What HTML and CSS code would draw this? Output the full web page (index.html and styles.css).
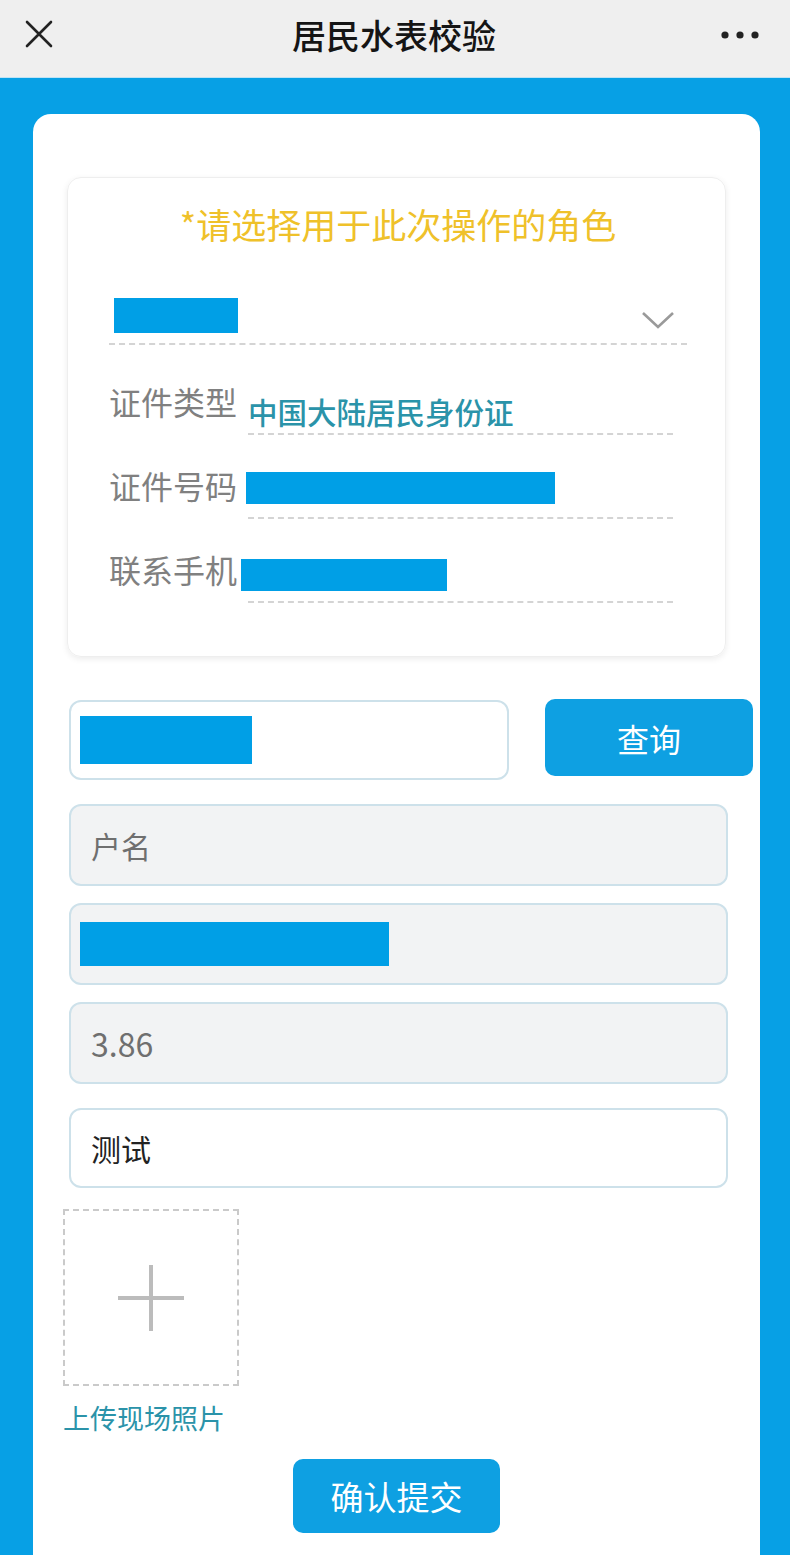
FILE: index.html
```html
<!DOCTYPE html>
<html lang="zh-CN">

<head>
    <meta charset="UTF-8">
    <meta name="viewport" content="width=device-width, initial-scale=1.0">
    <title>居民水表校验</title>
    <link rel="stylesheet" href="styles.css">
</head>

<body>
    <!-- Top bar -->
    <header class="topbar">
        <svg class="close-icon" width="28" height="28" viewBox="0 0 28 28">
            <path d="M2 2 L26 26 M26 2 L2 26" stroke="#222" stroke-width="2.6" fill="none" stroke-linecap="round" />
        </svg>
        <h1 class="topbar-title">居民水表校验</h1>
        <svg class="more-icon" width="38" height="10" viewBox="0 0 38 10">
            <circle cx="4" cy="5" r="3.6" fill="#222" />
            <circle cx="19" cy="5" r="3.6" fill="#222" />
            <circle cx="34" cy="5" r="3.6" fill="#222" />
        </svg>
    </header>

    <main class="page">
        <div class="card">

            <!-- Role selection -->
            <section class="role-card">
                <p class="role-title">*请选择用于此次操作的角色</p>

                <div class="role-select">
                    <span class="masked mask-role"></span>
                    <svg class="chevron" width="34" height="20" viewBox="0 0 34 20">
                        <path d="M2 3 L17 17 L32 3" stroke="#9a9a9a" stroke-width="2.6" fill="none" />
                    </svg>
                </div>

                <div class="info-rows">
                    <div class="info-row">
                        <span class="info-label">证件类型</span>
                        <div class="info-value"><span class="id-type">中国大陆居民身份证</span></div>
                    </div>
                    <div class="info-row">
                        <span class="info-label">证件号码</span>
                        <div class="info-value"><span class="masked mask-id"></span></div>
                    </div>
                    <div class="info-row">
                        <span class="info-label">联系手机</span>
                        <div class="info-value"><span class="masked mask-phone"></span></div>
                    </div>
                </div>
            </section>

            <!-- Search -->
            <div class="search-row">
                <div class="field search-input"><span class="masked mask-search"></span></div>
                <button class="btn btn-search">查询</button>
            </div>

            <div class="field readonly placeholder">户名</div>
            <div class="field readonly"><span class="masked mask-addr"></span></div>
            <div class="field readonly placeholder number">3.86</div>
            <div class="field note">测试</div>

            <!-- Photo upload -->
            <div class="upload">
                <div class="upload-box">
                    <svg width="70" height="70" viewBox="0 0 70 70">
                        <path d="M35 2 V68 M2 35 H68" stroke="#bcbcbc" stroke-width="4" fill="none" />
                    </svg>
                </div>
                <span class="upload-caption">上传现场照片</span>
            </div>

            <div class="submit-wrap">
                <button class="btn btn-submit">确认提交</button>
            </div>
        </div>
    </main>
</body>

</html>
```

FILE: styles.css
```css
body {
    margin: 0;
    width: 790px;
    height: 1555px;
    overflow: hidden;
    font-family: "Noto Sans CJK SC", "Noto Sans", sans-serif;
    background-color: #07a0e5;
}

/* Top bar */
.topbar {
    height: 77px;
    display: flex;
    align-items: center;
    justify-content: space-between;
    padding: 0 31px 0 25px;
    background-color: #efefef;
    border-bottom: 1px solid #bfe3f5;
}

.close-icon {
    margin-top: -9px;
}

.topbar-title {
    margin: -8px 0 0 14px;
    font-size: 34px;
    font-weight: 500;
    color: #151515;
}

.more-icon {
    margin-top: -8px;
}

/* Page */
.page {
    padding: 36px 30px 0 33px;
}

.card {
    min-height: 1441px;
    padding: 63px 34px 0;
    background-color: #ffffff;
    border-radius: 18px 18px 0 0;
}

/* Role card */
.role-card {
    padding: 22px 38px 53px 41px;
    border: 1px solid #eeeeee;
    border-radius: 14px;
    box-shadow: 0 2px 6px rgba(0, 0, 0, 0.08);
}

.role-title {
    margin: 0;
    line-height: 48px;
    text-align: center;
    font-size: 35px;
    color: #efc12a;
}

.role-select {
    margin-top: 40px;
    height: 55px;
    display: flex;
    align-items: center;
    justify-content: space-between;
    padding-left: 5px;
    border-bottom: 2px dashed #d4d4d4;
}

.chevron {
    margin: 8px 12px 0 0;
}

.masked {
    display: inline-block;
    background-color: #009fe6;
}

.mask-role {
    width: 124px;
    height: 35px;
}

.info-rows {
    padding-top: 6px;
}

.info-row {
    display: flex;
    align-items: flex-start;
    margin-top: 30px;
    margin-right: 14px;
}

.info-label {
    width: 139px;
    line-height: 40px;
    font-size: 32px;
    color: #808080;
    white-space: nowrap;
}

.info-value {
    flex: 1;
    height: 54px;
    box-sizing: border-box;
    padding-top: 10px;
    line-height: 40px;
    border-bottom: 2px dashed #d4d4d4;
}

.id-type {
    font-size: 29.5px;
    font-weight: 500;
    color: #2a93a9;
}

.mask-id {
    width: 309px;
    height: 32px;
    margin: -3px 0 0 -2px;
    vertical-align: top;
}

.mask-phone {
    width: 206px;
    height: 32px;
    margin: 0 0 0 -7px;
    vertical-align: top;
}

/* Fields */
.field {
    height: 82px;
    box-sizing: border-box;
    display: flex;
    align-items: center;
    margin: 0 -2px 0 2px;
    padding: 0 20px;
    border: 2px solid #cde1ea;
    border-radius: 12px;
    font-size: 30px;
    color: #222222;
}

.readonly {
    margin-top: 24px;
    background-color: #f2f3f4;
}

.readonly + .readonly {
    margin-top: 17px;
}

.placeholder {
    color: #6f6f6f;
}

.number {
    font-size: 32px;
}

.note {
    margin-top: 24px;
    height: 80px;
}

.search-row {
    display: flex;
    align-items: flex-start;
    gap: 38px;
    margin: 43px -29px 0 0;
}

.search-input {
    flex: 0 0 440px;
    height: 80px;
    padding-left: 9px;
}

.mask-search {
    width: 172px;
    height: 48px;
}

.mask-addr {
    width: 309px;
    height: 44px;
    margin-left: -11px;
}

/* Buttons */
.btn {
    border: none;
    border-radius: 10px;
    background-color: #0ea0e2;
    color: #ffffff;
    font-family: inherit;
    cursor: pointer;
}

.btn-search {
    width: 208px;
    height: 77px;
    margin-top: -1px;
    font-size: 32px;
}

/* Upload */
.upload {
    margin: 21px 0 0 -4px;
}

.upload-box {
    width: 176px;
    height: 177px;
    box-sizing: border-box;
    display: flex;
    align-items: center;
    justify-content: center;
    border: 2px dashed #cacaca;
}

.upload-caption {
    display: block;
    margin-top: 12px;
    font-size: 27px;
    color: #2b93a9;
}

.submit-wrap {
    display: flex;
    justify-content: center;
    margin-top: 22px;
}

.btn-submit {
    width: 207px;
    height: 74px;
    font-size: 33px;
}
```
